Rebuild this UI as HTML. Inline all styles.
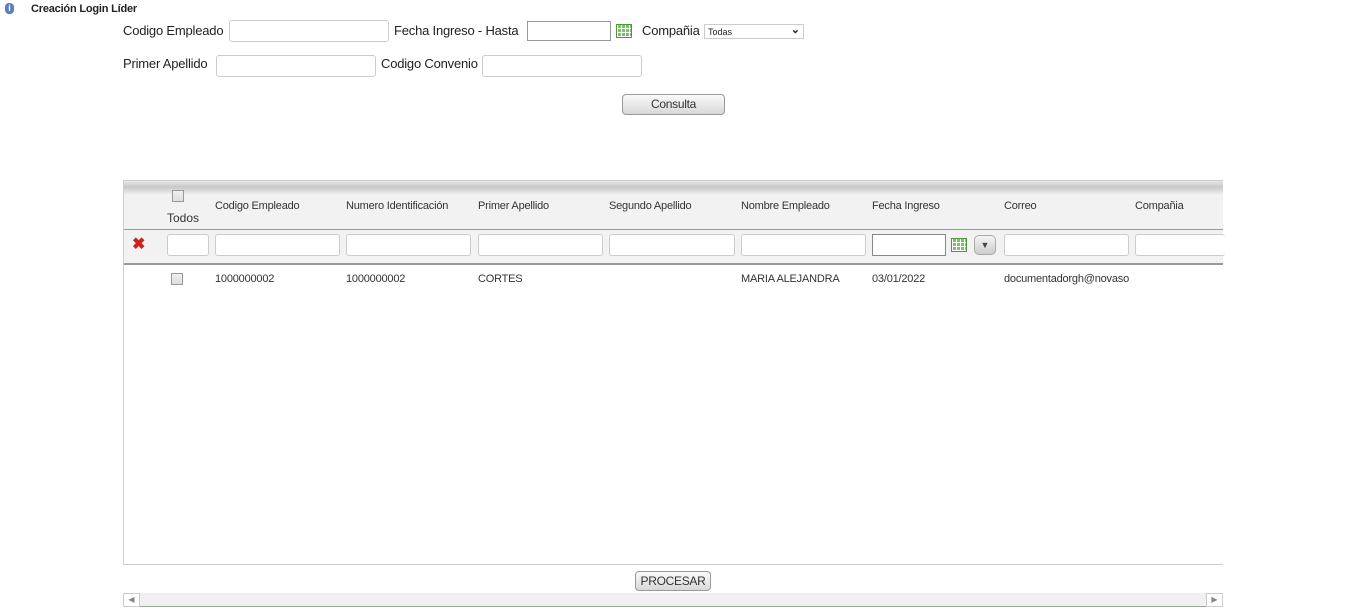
<!DOCTYPE html>
<html><head><meta charset="utf-8"><style>
*{box-sizing:border-box;margin:0;padding:0}
body{width:1347px;height:612px;background:#fff;font-family:"Liberation Sans",Arial,sans-serif;color:#222;position:relative;overflow:hidden}
.a{position:absolute;white-space:nowrap}
.l{font-size:13px;color:#222;letter-spacing:-0.2px}
.inp{position:absolute;border:1px solid #ccc;border-radius:3px;background:#fff}
.t{font-size:11px;color:#333;letter-spacing:-0.2px}
.btn{position:absolute;border:1px solid #999;border-radius:4px;background:linear-gradient(#fafafa,#d8d8d8);font-size:12px;text-align:center;color:#333;letter-spacing:-0.3px}
.cal{position:absolute;width:16px;height:14px;border:1px solid #4a9a3a;background:
repeating-linear-gradient(90deg,#fff 0 1px,transparent 1px 4px),repeating-linear-gradient(0deg,#fff 0 1px,#7cc06a 1px 4px)}
.cb{position:absolute;width:12px;height:12px;border:1px solid #999;background:linear-gradient(#eee,#ddd)}
</style></head><body>
<div class="a" style="left:5px;top:3px;width:9px;height:11px;border-radius:4px;background:#5a7fbf;color:#fff;font-size:9px;text-align:center;font-weight:bold;line-height:11px">i</div>
<div class="a" style="left:31px;top:3px;font-size:11px;font-weight:bold;letter-spacing:-0.2px">Creación Login Líder</div>

<div class="a l" style="left:123px;top:23px">Codigo Empleado</div>
<div class="inp" style="left:229px;top:20px;width:160px;height:22px"></div>
<div class="a l" style="left:394px;top:23px">Fecha Ingreso - Hasta</div>
<div class="inp" style="left:527px;top:21px;width:84px;height:20px;border-color:#999;border-radius:0"></div>
<div class="cal" style="left:616px;top:24px"></div>
<div class="a l" style="left:642px;top:23px">Compañia</div>
<div class="inp" style="left:704px;top:24px;width:100px;height:15px;border-radius:0;font-size:9px;padding:2px 0 0 3px">Todas<span style="position:absolute;right:3px;top:-2px;font-size:11px;font-weight:bold">&#8964;</span></div>

<div class="a l" style="left:123px;top:56px">Primer Apellido</div>
<div class="inp" style="left:216px;top:55px;width:160px;height:22px"></div>
<div class="a l" style="left:381px;top:56px">Codigo Convenio</div>
<div class="inp" style="left:482px;top:55px;width:160px;height:22px"></div>

<div class="btn" style="left:622px;top:94px;width:103px;height:21px;line-height:19px">Consulta</div>

<div class="a" style="left:123px;top:180px;width:1100px;height:385px;border:1px solid #ccc;border-right:none"></div>
<div class="a" style="left:124px;top:181px;width:1099px;height:48px;background:linear-gradient(#e8e8e8 0,#c8c8c8 6px,#f2f2f2 14px,#f2f2f2)"></div>
<div class="a" style="left:124px;top:229px;width:1099px;height:1px;background:#999"></div>
<div class="a" style="left:124px;top:230px;width:1099px;height:33px;background:#f2f2f2"></div>
<div class="a" style="left:124px;top:263px;width:1099px;height:2px;background:#999"></div>

<div class="cb" style="left:172px;top:190px"></div>
<div class="a" style="left:167px;top:211px;font-size:12px;color:#333">Todos</div>
<div class="a t" style="left:215px;top:200px">Codigo Empleado</div>
<div class="a t" style="left:346px;top:200px">Numero Identificación</div>
<div class="a t" style="left:478px;top:200px">Primer Apellido</div>
<div class="a t" style="left:609px;top:200px">Segundo Apellido</div>
<div class="a t" style="left:741px;top:200px">Nombre Empleado</div>
<div class="a t" style="left:872px;top:200px">Fecha Ingreso</div>
<div class="a t" style="left:1004px;top:200px">Correo</div>
<div class="a t" style="left:1135px;top:200px">Compañia</div>

<div class="a" style="left:132px;top:236px;color:#d02020;font-size:16px;font-weight:bold;line-height:18px">&#10006;</div>
<div class="inp" style="left:167px;top:234px;width:42px;height:22px"></div>
<div class="inp" style="left:215px;top:234px;width:125px;height:22px"></div>
<div class="inp" style="left:346px;top:234px;width:125px;height:22px"></div>
<div class="inp" style="left:478px;top:234px;width:125px;height:22px"></div>
<div class="inp" style="left:609px;top:234px;width:126px;height:22px"></div>
<div class="inp" style="left:741px;top:234px;width:125px;height:22px"></div>
<div class="inp" style="left:872px;top:234px;width:74px;height:22px;border-color:#888;border-radius:0"></div>
<div class="cal" style="left:951px;top:238px"></div>
<div class="a" style="left:974px;top:235px;width:22px;height:20px;border:1px solid #aaa;border-radius:5px;background:linear-gradient(#f4f4f4,#ccc);text-align:center;font-size:9px;line-height:18px;color:#444">&#9660;</div>
<div class="inp" style="left:1004px;top:234px;width:125px;height:22px"></div>
<div class="inp" style="left:1135px;top:234px;width:90px;height:22px;border-right:none"></div>

<div class="cb" style="left:171px;top:273px"></div>
<div class="a t" style="left:215px;top:273px">1000000002</div>
<div class="a t" style="left:346px;top:273px">1000000002</div>
<div class="a t" style="left:478px;top:273px">CORTES</div>
<div class="a t" style="left:741px;top:273px">MARIA ALEJANDRA</div>
<div class="a t" style="left:872px;top:273px">03/01/2022</div>
<div class="a t" style="left:1004px;top:273px;width:125px;overflow:hidden">documentadorgh@novasoft</div>

<div class="btn" style="left:635px;top:571px;width:76px;height:20px;line-height:18px">PROCESAR</div>
<div class="a" style="left:123px;top:593px;width:1100px;height:14px;background:#f0f0f0;border-bottom:1px solid #9a9"></div>
<div class="a" style="left:123px;top:593px;width:17px;height:14px;border:1px solid #ccc;background:#fff;font-size:8px;color:#888;text-align:center;line-height:12px">&#9664;</div>
<div class="a" style="left:1206px;top:593px;width:17px;height:14px;border:1px solid #ccc;background:#fff;font-size:8px;color:#888;text-align:center;line-height:12px">&#9654;</div>
</body></html>
